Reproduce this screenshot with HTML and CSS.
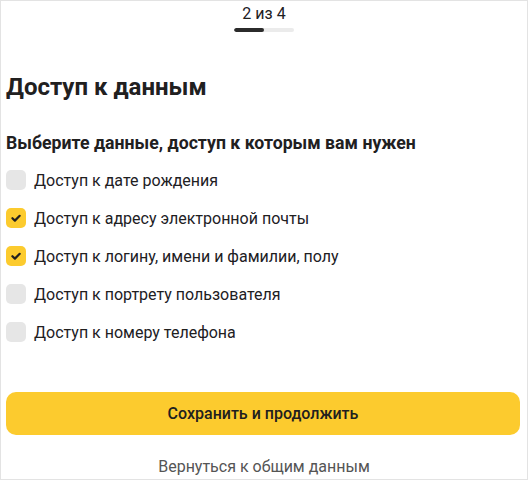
FILE: index.html
```html
<!DOCTYPE html>
<html lang="ru">
<head>
<meta charset="utf-8">
<link rel="stylesheet" href="styles.css">
</head>
<body>
<div class="page">
  <div class="step">2 из 4</div>
  <div class="progress"><div class="progress-fill"></div></div>
  <h1 class="title">Доступ к данным</h1>
  <h2 class="subtitle">Выберите данные, доступ к которым вам нужен</h2>
  <ul class="options">
    <li class="option"><span class="box"></span><span class="label">Доступ к дате рождения</span></li>
    <li class="option"><span class="box checked"><svg viewBox="0 0 20 20" width="20" height="20"><path d="M6.4 10.2l2.5 2.4 4.8-4.8" fill="none" stroke="#21201f" stroke-width="2.2" stroke-linecap="round" stroke-linejoin="round"/></svg></span><span class="label">Доступ к адресу электронной почты</span></li>
    <li class="option"><span class="box checked"><svg viewBox="0 0 20 20" width="20" height="20"><path d="M6.4 10.2l2.5 2.4 4.8-4.8" fill="none" stroke="#21201f" stroke-width="2.2" stroke-linecap="round" stroke-linejoin="round"/></svg></span><span class="label">Доступ к логину, имени и фамилии, полу</span></li>
    <li class="option"><span class="box"></span><span class="label">Доступ к портрету пользователя</span></li>
    <li class="option"><span class="box"></span><span class="label">Доступ к номеру телефона</span></li>
  </ul>
  <button class="primary">Сохранить и продолжить</button>
  <a class="back">Вернуться к общим данным</a>
</div>
</body>
</html>
```
FILE: styles.css
```css
html, body {
  margin: 0;
  padding: 0;
  background: #fff;
}
.page {
  box-sizing: border-box;
  width: 528px;
  height: 480px;
  border: 1px solid #e3e3e3;
  padding: 0 4px;
  font-family: Roboto, "Noto Sans", sans-serif;
  color: #21201f;
  display: flex;
  flex-direction: column;
  overflow: hidden;
}
.step {
  text-align: center;
  font-size: 16px;
  line-height: 20px;
  margin-top: 3px;
}
.progress {
  width: 60px;
  height: 4px;
  border-radius: 2px;
  background: #ebebeb;
  margin: 4px auto 0;
  overflow: hidden;
}
.progress-fill {
  width: 30px;
  height: 4px;
  border-radius: 2px;
  background: #2b2b2b;
}
.title {
  margin: 41px 0 0 1px;
  font-size: 24px;
  line-height: 28px;
  font-weight: 700;
}
.subtitle {
  margin: 31px 0 0 1px;
  font-size: 17.7px;
  line-height: 22px;
  font-weight: 700;
}
.options {
  list-style: none;
  margin: 16px 0 0;
  padding: 0;
  display: flex;
  flex-direction: column;
  gap: 18px;
}
.option {
  display: flex;
  align-items: center;
  height: 20px;
  gap: 8px;
  padding-left: 1px;
}
.box {
  width: 20px;
  height: 20px;
  border-radius: 5px;
  background: #e6e6e6;
  flex: none;
  display: flex;
}
.box.checked {
  background: #fccb2e;
}
.label {
  font-size: 16px;
  line-height: 20px;
  padding-top: 2px;
}
.primary {
  margin: 50px 3px 0 1px;
  height: 43px;
  border: none;
  border-radius: 10px;
  background: #fccb2e;
  font-family: inherit;
  font-size: 16px;
  font-weight: 500;
  color: #21201f;
}
.back {
  margin-top: 22px;
  text-align: center;
  font-size: 16px;
  line-height: 20px;
  color: #555;
}
```
